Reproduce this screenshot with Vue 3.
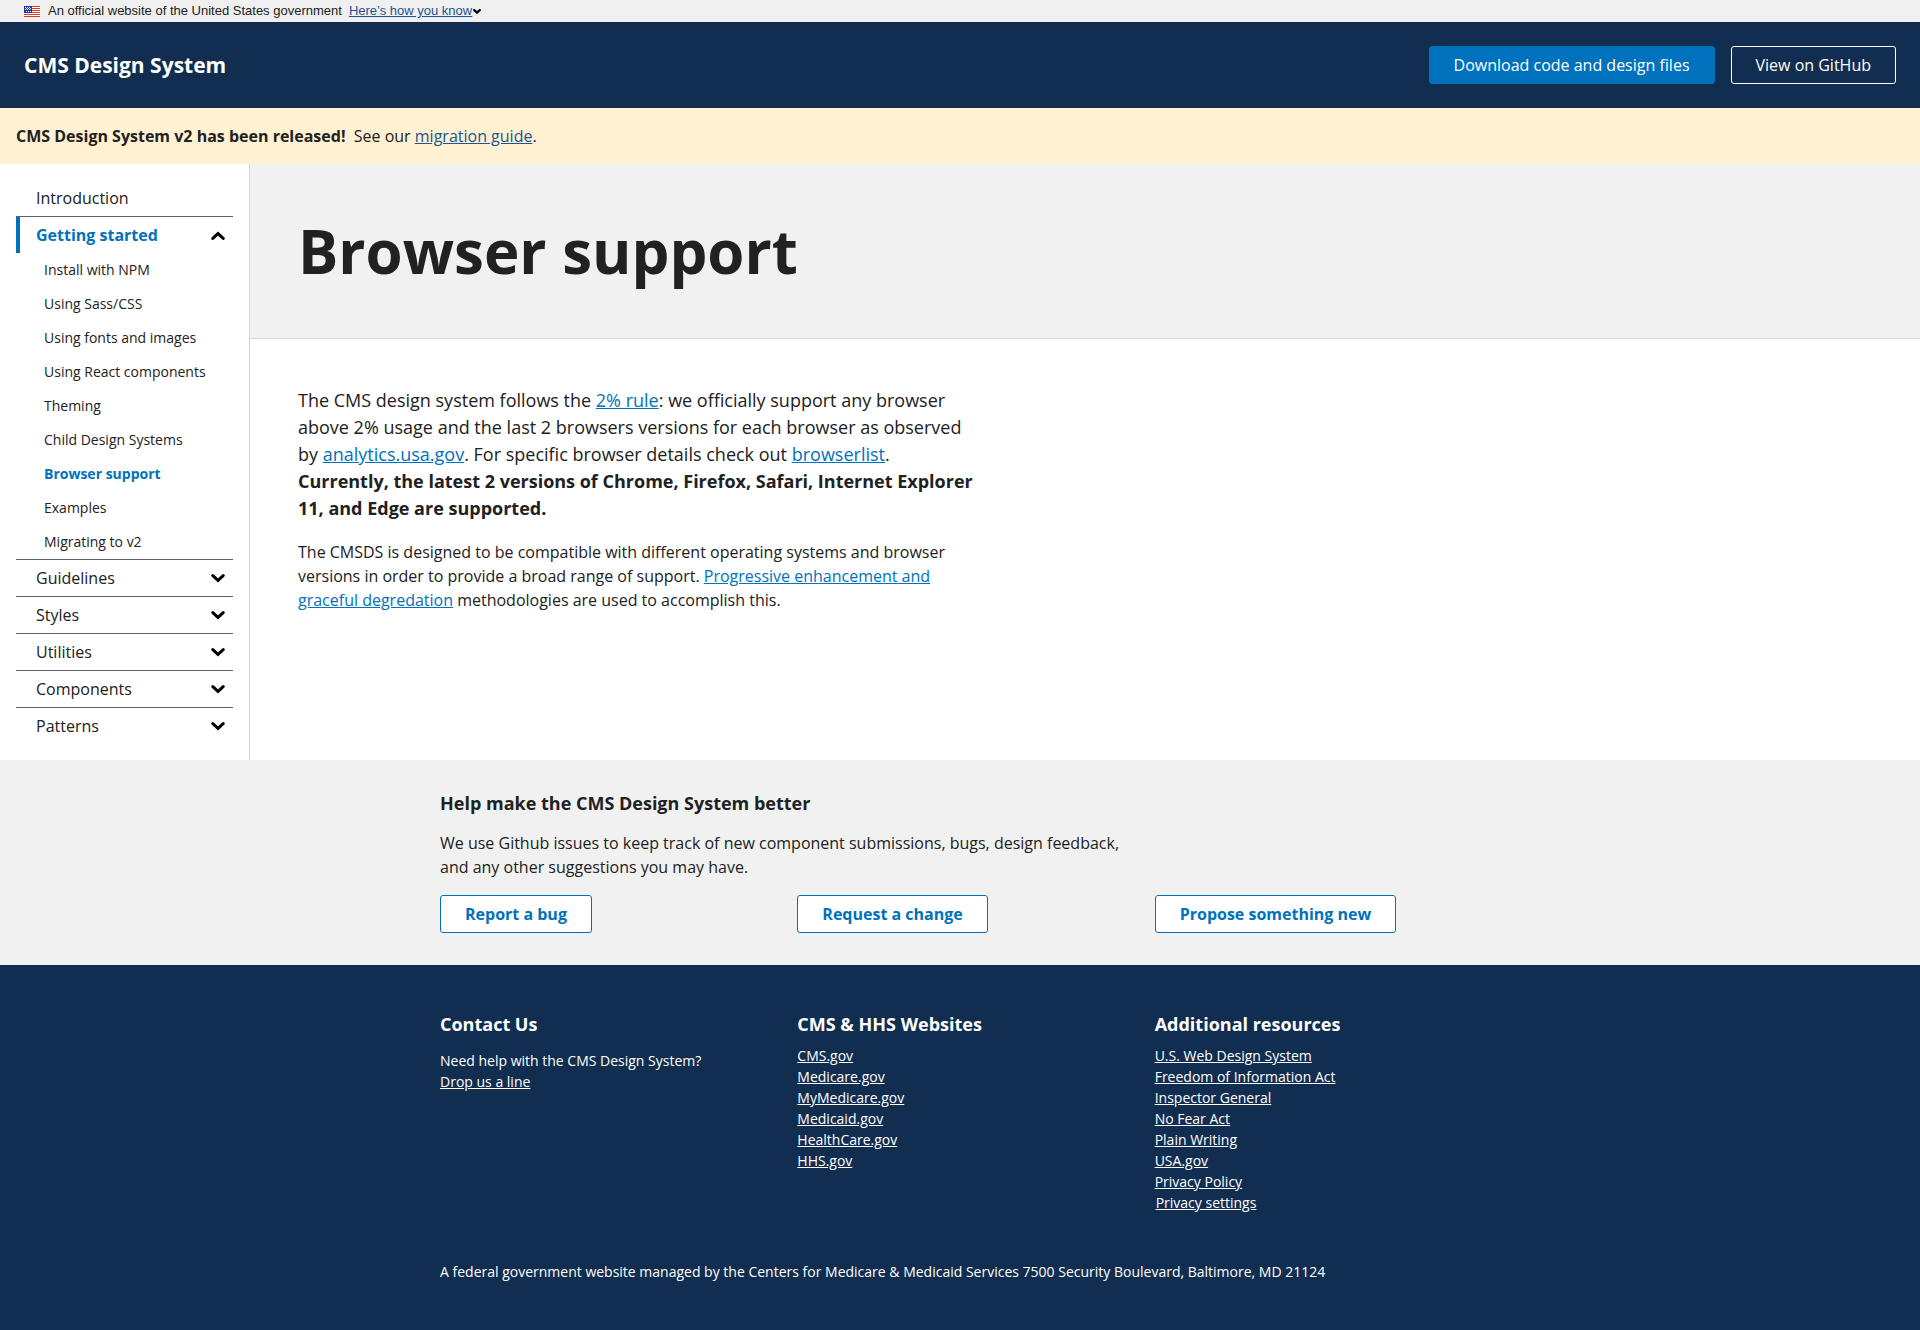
<script setup>
import { ref } from 'vue'

const sections = ref([
  { title: 'Introduction', items: null },
  {
    title: 'Getting started',
    active: true,
    open: true,
    items: [
      'Install with NPM',
      'Using Sass/CSS',
      'Using fonts and images',
      'Using React components',
      'Theming',
      'Child Design Systems',
      'Browser support',
      'Examples',
      'Migrating to v2',
    ],
  },
  { title: 'Guidelines', items: [] },
  { title: 'Styles', items: [] },
  { title: 'Utilities', items: [] },
  { title: 'Components', items: [] },
  { title: 'Patterns', items: [] },
])
const currentPage = 'Browser support'

const cmsSites = ['CMS.gov', 'Medicare.gov', 'MyMedicare.gov', 'Medicaid.gov', 'HealthCare.gov', 'HHS.gov']
const resources = [
  'U.S. Web Design System',
  'Freedom of Information Act',
  'Inspector General',
  'No Fear Act',
  'Plain Writing',
  'USA.gov',
  'Privacy Policy',
]
const feedback = ['Report a bug', 'Request a change', 'Propose something new']
const stars = [[1, 1], [3, 1], [5, 1], [2, 2], [4, 2], [6, 2], [1, 3], [3, 3], [5, 3], [2, 5], [4, 5], [6, 5]]
</script>

<template>
  <div class="page">
    <div class="usa-banner">
      <svg class="flag" viewBox="0 0 16 11" aria-hidden="true">
        <rect width="16" height="11" fill="#fff" />
        <path d="M0 .5h16M0 2.5h16M0 4.5h16M0 6.5h16M0 8.5h16M0 10.5h16" stroke="#e0361f" />
        <rect width="8" height="7" fill="#1d33b0" />
        <rect v-for="([x, y], i) in stars" :key="i" :x="x" :y="y" width="1" height="1" fill="#fff" />
      </svg>
      <span>An official website of the United States government</span>
      <button type="button" class="banner-toggle">
        <span>Here’s how you know</span>
        <svg viewBox="0 0 14 9" aria-hidden="true"><path d="M2 2 7 6.5 12 2" /></svg>
      </button>
    </div>

    <header class="site-header">
      <a href="#" class="site-title">CMS Design System</a>
      <div class="header-actions">
        <a href="#" class="btn btn-primary">Download code and design files</a>
        <a href="#" class="btn btn-inverse">View on GitHub</a>
      </div>
    </header>

    <div class="notice"><strong>CMS Design System v2 has been released!</strong>&nbsp; See our <a href="#">migration guide</a>.</div>

    <div class="body">
      <nav class="sidebar" aria-label="Documentation">
        <ul>
          <li v-for="s in sections" :key="s.title" class="section">
            <a v-if="!s.items" href="#" class="section-title">{{ s.title }}</a>
            <button
              v-else
              type="button"
              class="section-title"
              :class="{ active: s.active }"
              :aria-expanded="!!s.open"
              @click="s.open = !s.open"
            >
              <span>{{ s.title }}</span>
              <svg :class="{ up: s.open }" viewBox="0 0 14 9" aria-hidden="true"><path d="M1.8 1.6 7 6.4 12.2 1.6" /></svg>
            </button>
            <ul v-if="s.open">
              <li v-for="item in s.items" :key="item">
                <a href="#" class="sub-link" :class="{ current: item === currentPage }">{{ item }}</a>
              </li>
            </ul>
          </li>
        </ul>
      </nav>

      <main>
        <div class="hero"><h1>Browser support</h1></div>
        <div class="content">
          <p class="lead">
            The CMS design system follows the <a href="#">2% rule</a>: we officially support any browser above 2% usage
            and the last 2 browsers versions for each browser as observed by <a href="#">analytics.usa.gov</a>. For
            specific browser details check out <a href="#">browserlist</a>. <strong>Currently, the latest 2 versions of
            Chrome, Firefox, Safari, Internet Explorer 11, and Edge are supported.</strong>
          </p>
          <p>
            The CMSDS is designed to be compatible with different operating systems and browser versions in order to
            provide a broad range of support. <a href="#">Progressive enhancement and graceful degredation</a>
            methodologies are used to accomplish this.
          </p>
        </div>
      </main>
    </div>

    <section class="help">
      <div class="container">
        <h2>Help make the CMS Design System better</h2>
        <p>
          We use Github issues to keep track of new component submissions, bugs, design feedback, and any other
          suggestions you may have.
        </p>
        <div class="columns">
          <div v-for="f in feedback" :key="f"><a href="#" class="btn btn-outline">{{ f }}</a></div>
        </div>
      </div>
    </section>

    <footer>
      <div class="container">
        <div class="columns">
          <div>
            <h2>Contact Us</h2>
            <p class="contact">Need help with the CMS Design System?<br /><a href="#">Drop us a line</a></p>
          </div>
          <div>
            <h2>CMS &amp; HHS Websites</h2>
            <ul>
              <li v-for="l in cmsSites" :key="l"><a href="#">{{ l }}</a></li>
            </ul>
          </div>
          <div>
            <h2>Additional resources</h2>
            <ul>
              <li v-for="l in resources" :key="l"><a href="#">{{ l }}</a></li>
              <li><button type="button" class="settings">Privacy settings</button></li>
            </ul>
          </div>
        </div>
        <p class="address">
          A federal government website managed by the Centers for Medicare &amp; Medicaid Services 7500 Security
          Boulevard, Baltimore, MD 21124
        </p>
      </div>
    </footer>
  </div>
</template>

<style>
body {
  margin: 0;
  background: #112e51;
}
</style>

<style scoped>
.page {
  background: #fff;
  color: #212121;
  font: 16px/24px "Open Sans", "Noto Sans", sans-serif;
}
h1, h2, p, ul {
  margin: 0;
  padding: 0;
}
ul {
  list-style: none;
}
button {
  font: inherit;
  color: inherit;
  background: none;
  border: 0;
  padding: 0;
  cursor: pointer;
}
a {
  color: #0071bc;
}
.usa-banner {
  display: flex;
  align-items: center;
  height: 22px;
  padding: 0 24px;
  background: #f0f0f0;
  font: 13px/16px "Liberation Sans", Arial, sans-serif;
}
.flag {
  width: 16px;
  height: 11px;
  margin-right: 8px;
}
.banner-toggle {
  display: flex;
  align-items: center;
  gap: 1px;
  margin-left: 7px;
}
.banner-toggle span {
  color: #205493;
  text-decoration: underline;
}
svg path {
  fill: none;
}
.banner-toggle svg {
  width: 8px;
  height: 5px;
}
.banner-toggle path,
.section-title path {
  stroke: #000;
  stroke-width: 4;
  stroke-linecap: round;
}
.site-header {
  display: flex;
  align-items: center;
  justify-content: space-between;
  padding: 24px;
  background: #112e51;
}
.site-title {
  color: #fff;
  font-size: 21px;
  font-weight: 700;
  text-decoration: none;
}
.header-actions {
  display: flex;
  gap: 16px;
}
.btn {
  display: inline-block;
  box-sizing: border-box;
  height: 38px;
  padding: 6px 24px;
  border: 1px solid;
  border-radius: 3px;
  text-decoration: none;
  white-space: nowrap;
}
.btn-primary {
  color: #fff;
  background: #0071bc;
  border-color: #0071bc;
}
.btn-inverse {
  color: #fff;
}
.btn-outline {
  color: #0071bc;
  background: #fff;
  font-weight: 700;
}
.notice {
  padding: 16px;
  background: #fff1d2;
}
.notice a {
  color: #205493;
}
.body {
  display: flex;
}
.sidebar {
  flex: 0 0 250px;
  box-sizing: border-box;
  padding: 16px;
  border-right: 1px solid #d6d7d9;
}
.section + .section {
  border-top: 1px solid #5b616b;
}
.section-title {
  display: flex;
  align-items: center;
  justify-content: space-between;
  box-sizing: border-box;
  width: 100%;
  padding: 6px 8px 6px 16px;
  border-left: 4px solid transparent;
  color: #212121;
  text-decoration: none;
}
.section-title.active {
  border-left-color: #0071bc;
  color: #0071bc;
  font-weight: 700;
}
.section-title svg {
  width: 14px;
  height: 9px;
}
.section-title path {
  stroke-width: 3;
}
.section-title svg.up {
  transform: rotate(180deg);
}
.sub-link {
  display: block;
  padding: 6px 0 6px 28px;
  color: #212121;
  font-size: 14px;
  line-height: 22px;
  text-decoration: none;
}
.sub-link.current {
  color: #0071bc;
  font-weight: 700;
}
main {
  flex: 1;
  min-width: 0;
}
.hero {
  padding: 48px;
  background: #f1f1f1;
  border-bottom: 1px solid #d6d7d9;
}
h1 {
  font-size: 60px;
  line-height: 78px;
}
.content {
  max-width: 680px;
  padding: 48px;
}
.lead {
  margin-bottom: 18px;
  font-size: 18px;
  line-height: 27px;
}
.container {
  max-width: 1040px;
  margin: 0 auto;
}
.columns {
  display: grid;
  grid-template-columns: repeat(3, 1fr);
  gap: 32px;
}
h2 {
  font-size: 18px;
  line-height: 23px;
}
.help {
  padding: 32px;
  background: #f1f1f1;
}
.help p {
  max-width: 690px;
  margin: 16px 0;
}
footer {
  padding: 48px 32px;
  background: #112e51;
  color: #fff;
  font-size: 14px;
  line-height: 21px;
}
footer a {
  color: #fff;
}
footer ul {
  margin-top: 9px;
}
.contact {
  margin-top: 14px;
}
.settings {
  display: block;
  padding: 0 1px;
  text-decoration: underline;
}
.address {
  margin-top: 48px;
}
</style>
